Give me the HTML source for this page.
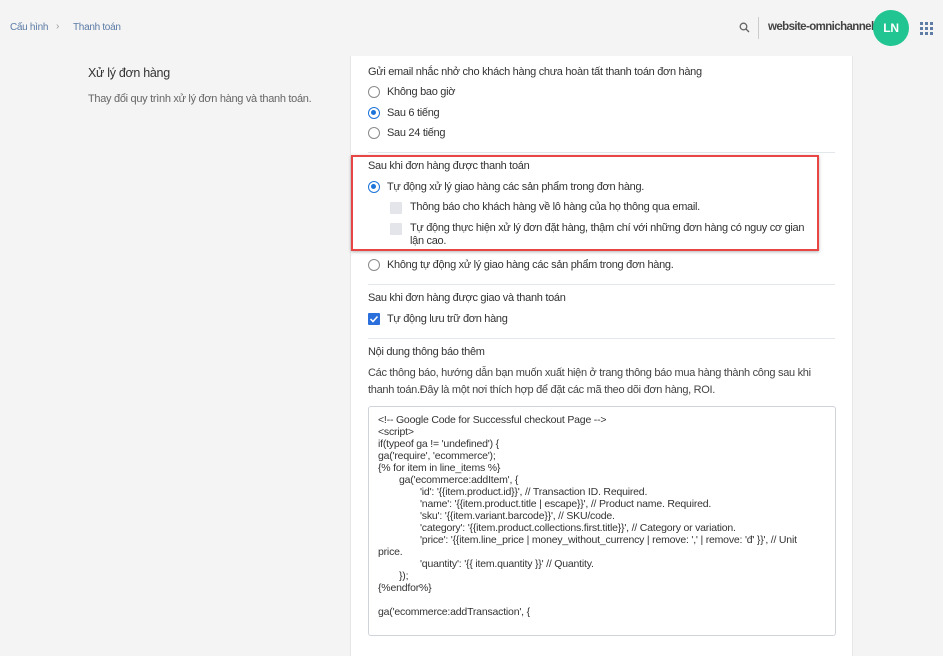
<!DOCTYPE html>
<html><head><meta charset="utf-8"><style>
*{margin:0;padding:0;box-sizing:border-box}
body{width:943px;height:619px;overflow:hidden;background:#f4f4f4;font-family:"Liberation Sans",sans-serif;color:#333;position:relative;font-size:11px;letter-spacing:-0.3px}
.a{position:absolute;white-space:nowrap}
.card{position:absolute;left:350px;top:56px;width:503px;height:600px;background:#fff;border-left:1px solid #e6e6e6;border-right:1px solid #e6e6e6}
.hr{position:absolute;left:368px;width:467px;height:1px;background:#e3e6ea}
.r{position:absolute;width:12px;height:12px;border:1px solid #8a8a8a;border-radius:50%;background:#fff}
.r.on{border:1.5px solid #1d74d9}
.r.on::after{content:"";position:absolute;left:2px;top:2px;width:5px;height:5px;border-radius:50%;background:#1d74d9}
.cb{position:absolute;width:12px;height:12px;background:#e3e5ea;border-radius:1px}
.t{font-size:11px;color:#333}
.code{position:absolute;left:368px;top:406px;width:468px;height:230px;border:1px solid #cfd4da;border-radius:3px;background:#fff}
.code div{position:absolute;white-space:nowrap;font-size:10.5px;letter-spacing:-0.2px;color:#333;line-height:12px}
</style></head><body>
<div class="a" style="left:10px;top:22px;color:#5b7ba6;font-size:10px">Cấu hình</div>
<div class="a" style="left:56px;top:21px;color:#999;font-size:10px">›</div>
<div class="a" style="left:73px;top:22px;color:#5b7ba6;font-size:10px">Thanh toán</div>
<svg class="a" style="left:739px;top:22px" width="11" height="11" viewBox="0 0 11 11"><circle cx="4.5" cy="4.5" r="3.3" fill="none" stroke="#666" stroke-width="1.3"/><path d="M7 7l3 3" stroke="#666" stroke-width="1.4"/></svg>
<div class="a" style="left:758px;top:17px;width:1px;height:22px;background:#ccc"></div>
<div class="a" style="left:768px;top:21px;font-size:11.5px;font-weight:bold;color:#444;letter-spacing:-0.6px">website-omnichannel</div>
<div class="a" style="left:873px;top:10px;width:36px;height:36px;border-radius:50%;background:#21c591;color:#fff;font-weight:bold;font-size:12px;text-align:center;line-height:36px">LN</div>
<svg class="a" style="left:920px;top:22px" width="13" height="13"><g fill="#5f7ca6"><rect x="0" y="0" width="3" height="3"/><rect x="5" y="0" width="3" height="3"/><rect x="10" y="0" width="3" height="3"/><rect x="0" y="5" width="3" height="3"/><rect x="5" y="5" width="3" height="3"/><rect x="10" y="5" width="3" height="3"/><rect x="0" y="10" width="3" height="3"/><rect x="5" y="10" width="3" height="3"/><rect x="10" y="10" width="3" height="3"/></g></svg>

<div class="a" style="left:88px;top:66px;font-size:12.5px;color:#333">Xử lý đơn hàng</div>
<div class="a" style="left:88px;top:93px;font-size:11px;color:#666">Thay đổi quy trình xử lý đơn hàng và thanh toán.</div>

<div class="card"></div>
<div class="a t" style="left:368px;top:66px">Gửi email nhắc nhở cho khách hàng chưa hoàn tất thanh toán đơn hàng</div>
<div class="r" style="left:368px;top:86px"></div><div class="a t" style="left:387px;top:86px">Không bao giờ</div>
<div class="r on" style="left:368px;top:107px"></div><div class="a t" style="left:387px;top:107px">Sau 6 tiếng</div>
<div class="r" style="left:368px;top:127px"></div><div class="a t" style="left:387px;top:127px">Sau 24 tiếng</div>
<div class="hr" style="top:152px"></div>
<div class="a" style="left:351px;top:155px;width:468px;height:96px;border:2px solid #e84545;box-shadow:0 1px 3px rgba(0,0,0,.3)"></div>
<div class="a t" style="left:368px;top:160px">Sau khi đơn hàng được thanh toán</div>
<div class="r on" style="left:368px;top:181px"></div><div class="a t" style="left:387px;top:181px">Tự động xử lý giao hàng các sản phẩm trong đơn hàng.</div>
<div class="cb" style="left:390px;top:202px"></div><div class="a t" style="left:410px;top:201px">Thông báo cho khách hàng về lô hàng của họ thông qua email.</div>
<div class="cb" style="left:390px;top:223px"></div><div class="a t" style="left:410px;top:222px">Tự động thực hiện xử lý đơn đặt hàng, thậm chí với những đơn hàng có nguy cơ gian</div>
<div class="a t" style="left:410px;top:235px">lận cao.</div>
<div class="r" style="left:368px;top:259px"></div><div class="a t" style="left:387px;top:259px">Không tự động xử lý giao hàng các sản phẩm trong đơn hàng.</div>
<div class="hr" style="top:284px"></div>
<div class="a t" style="left:368px;top:292px">Sau khi đơn hàng được giao và thanh toán</div>
<div class="a" style="left:368px;top:313px;width:12px;height:12px;background:#2a6fdb;border-radius:1px"><svg width="12" height="12"><path d="M2.5 6l2.5 2.5 4.5-5" stroke="#fff" stroke-width="1.5" fill="none"/></svg></div>
<div class="a t" style="left:387px;top:313px">Tự động lưu trữ đơn hàng</div>
<div class="hr" style="top:338px"></div>
<div class="a t" style="left:368px;top:346px">Nội dung thông báo thêm</div>
<div class="a t" style="left:368px;top:367px;color:#444">Các thông báo, hướng dẫn bạn muốn xuất hiện ở trang thông báo mua hàng thành công sau khi</div>
<div class="a t" style="left:368px;top:384px;color:#444">thanh toán.Đây là một nơi thích hợp để đặt các mã theo dõi đơn hàng, ROI.</div>
<div class="code">
<div style="left:9px;top:7px">&lt;!-- Google Code for Successful checkout Page --&gt;</div>
<div style="left:9px;top:19px">&lt;script&gt;</div>
<div style="left:9px;top:31px">if(typeof ga != 'undefined') {</div>
<div style="left:9px;top:43px">ga('require', 'ecommerce');</div>
<div style="left:9px;top:55px">{% for item in line_items %}</div>
<div style="left:30px;top:67px">ga('ecommerce:addItem', {</div>
<div style="left:51px;top:79px">'id': '{{item.product.id}}', // Transaction ID. Required.</div>
<div style="left:51px;top:91px">'name': '{{item.product.title | escape}}', // Product name. Required.</div>
<div style="left:51px;top:103px">'sku': '{{item.variant.barcode}}', // SKU/code.</div>
<div style="left:51px;top:115px">'category': '{{item.product.collections.first.title}}', // Category or variation.</div>
<div style="left:51px;top:127px">'price': '{{item.line_price | money_without_currency | remove: ',' | remove: 'đ' }}', // Unit</div>
<div style="left:9px;top:139px">price.</div>
<div style="left:51px;top:151px">'quantity': '{{ item.quantity }}' // Quantity.</div>
<div style="left:30px;top:163px">});</div>
<div style="left:9px;top:175px">{%endfor%}</div>
<div style="left:9px;top:199px">ga('ecommerce:addTransaction', {</div>
</div>
</body></html>
